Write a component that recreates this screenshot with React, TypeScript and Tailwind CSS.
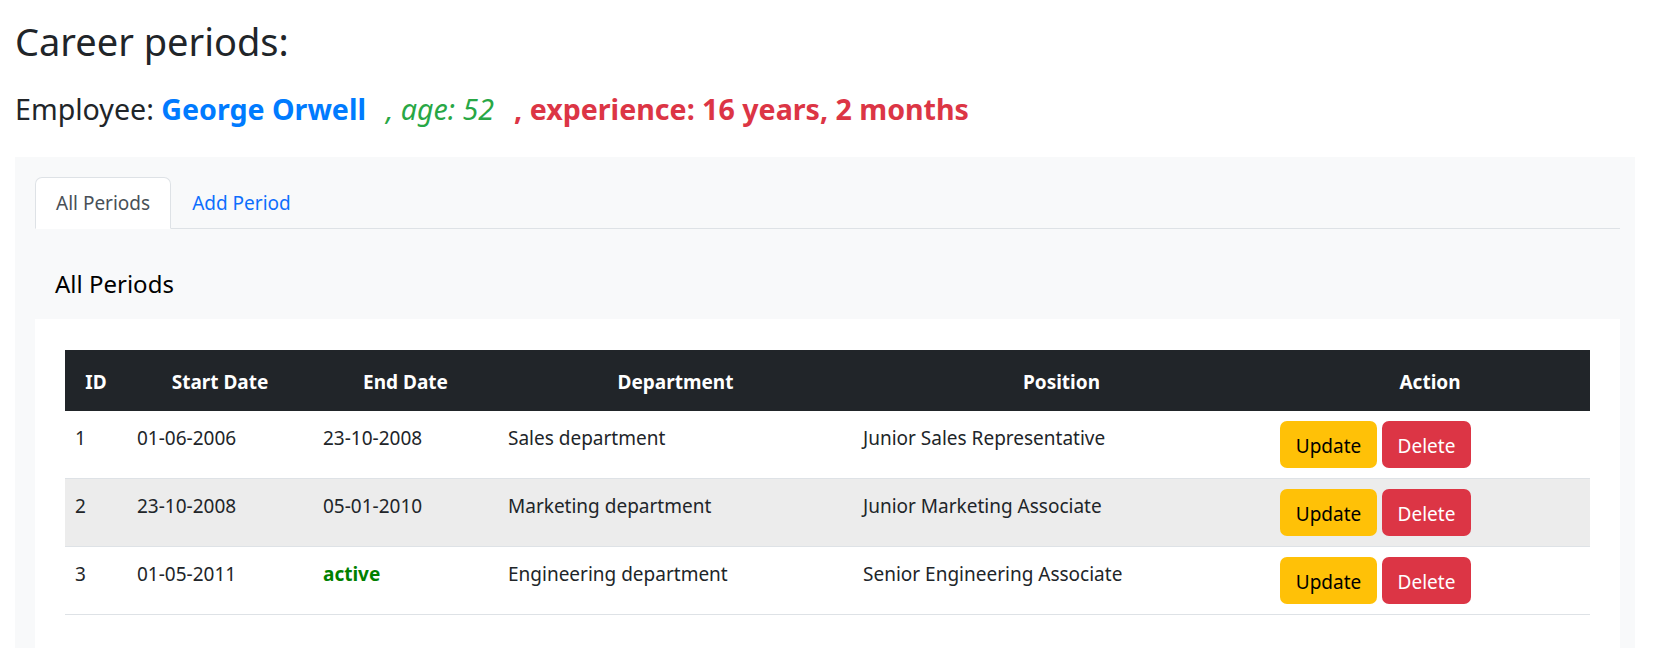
import { useState } from "react";

type Period = {
  id: number;
  start: string;
  end: string | null;
  department: string;
  position: string;
};

const periods: Period[] = [
  { id: 1, start: "01-06-2006", end: "23-10-2008", department: "Sales department", position: "Junior Sales Representative" },
  { id: 2, start: "23-10-2008", end: "05-01-2010", department: "Marketing department", position: "Junior Marketing Associate" },
  { id: 3, start: "01-05-2011", end: null, department: "Engineering department", position: "Senior Engineering Associate" },
];

const App = () => {
  const [tab, setTab] = useState<"all" | "add">("all");

  return (
    <div className="min-h-screen bg-white pl-[15px] pr-[22px] font-['Noto_Sans',sans-serif] text-[#212529]">
      <h2 className="pt-[17px] text-[38px] leading-[48px] font-normal">Career periods:</h2>

      <h4 className="mt-[26px] text-[28.6px] leading-[36px] font-normal">
        Employee: <span className="font-bold text-[#007bff]">George Orwell</span>
        <span className="ml-5 italic text-[#28a745]">, age: 52</span>
        <span className="ml-5 font-bold text-[#dc3545]">, experience: 16 years, 2 months</span>
      </h4>

      {/* Tabs panel */}
      <div className="mt-[30px] bg-[#f8f9fa] pt-5 pl-5 pr-[15px]">
        <div className="flex border-b border-[#dee2e6] text-[19px] leading-[30px]">
          <button
            className={
              tab === "all"
                ? "-mb-px rounded-t-[7px] border border-[#dee2e6] border-b-white bg-white px-5 py-[10px] text-[#495057]"
                : "-mb-px rounded-t-[7px] border border-transparent px-5 py-[10px] text-[#0d6efd]"
            }
            onClick={() => setTab("all")}
          >
            All Periods
          </button>
          <button
            className={
              tab === "add"
                ? "-mb-px rounded-t-[7px] border border-[#dee2e6] border-b-white bg-white px-5 py-[10px] text-[#495057]"
                : "-mb-px rounded-t-[7px] border border-transparent px-5 py-[10px] text-[#0d6efd]"
            }
            onClick={() => setTab("add")}
          >
            Add Period
          </button>
        </div>

        <h5 className="px-5 pt-10 pb-5 text-[24px] leading-[30px] font-normal text-black">All Periods</h5>

        <div className="bg-white px-[30px] pt-[31px] pb-[40px]">
          <table className="w-full table-fixed border-collapse text-[19px] leading-[30px]">
            <colgroup>
              <col className="w-[62px]" />
              <col className="w-[186px]" />
              <col className="w-[185px]" />
              <col className="w-[355px]" />
              <col className="w-[417px]" />
              <col />
            </colgroup>
            <thead>
              <tr className="h-[61px] bg-[#212529] text-white">
                <th className="px-[10px] pt-[2px] text-center font-bold">ID</th>
                <th className="px-[10px] pt-[2px] text-center font-bold">Start Date</th>
                <th className="px-[10px] pt-[2px] text-center font-bold">End Date</th>
                <th className="px-[10px] pt-[2px] text-center font-bold">Department</th>
                <th className="px-[10px] pt-[2px] text-center font-bold">Position</th>
                <th className="px-[10px] pt-[2px] text-center font-bold">Action</th>
              </tr>
            </thead>
            <tbody>
              {periods.map((p, i) => (
                <tr key={p.id} className={i % 2 === 1 ? "border-b border-[#dee2e6] bg-[#ececec]" : "border-b border-[#dee2e6]"}>
                  <td className="px-[10px] pt-[12px] pb-[8px] align-top">{p.id}</td>
                  <td className="px-[10px] pt-[12px] pb-[8px] align-top">{p.start}</td>
                  <td className="px-[10px] pt-[12px] pb-[8px] align-top">
                    {p.end ?? <span className="font-bold text-[#008000]">active</span>}
                  </td>
                  <td className="px-[10px] pt-[12px] pb-[8px] align-top">{p.department}</td>
                  <td className="px-[10px] pt-[12px] pb-[8px] align-top">{p.position}</td>
                  <td className="p-[10px] align-top">
                    <div className="flex">
                      <button className="flex h-[47px] w-[97px] items-center justify-center rounded-[7px] bg-[#ffc107] pt-[3px] text-black">
                        Update
                      </button>
                      <button className="ml-[5px] flex h-[47px] w-[89px] items-center justify-center rounded-[7px] bg-[#dc3545] pt-[3px] text-white">
                        Delete
                      </button>
                    </div>
                  </td>
                </tr>
              ))}
            </tbody>
          </table>
        </div>
      </div>
    </div>
  );
};

export default App;
